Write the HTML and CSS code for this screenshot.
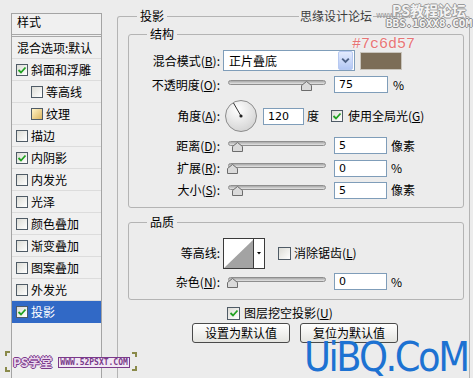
FILE: index.html
```html
<!DOCTYPE html>
<html lang="zh-CN">
<head>
  <meta charset="UTF-8">
  <title>图层样式 - 投影</title>
  <link rel="stylesheet" href="styles.css">
</head>
<body>
<div class="dialog">
  <div class="styles-list">
    <div class="list-head">样式</div>
    <div class="list-item plain">混合选项:默认</div>
    <div class="list-item"><span class="cb on"><svg viewBox="0 0 10 10"><path d="M1.5 5 L4 7.5 L8.5 2.5"/></svg></span>斜面和浮雕</div>
    <div class="list-item sub"><span class="cb"></span>等高线</div>
    <div class="list-item sub"><span class="cb texture"></span>纹理</div>
    <div class="list-item"><span class="cb"></span>描边</div>
    <div class="list-item"><span class="cb on"><svg viewBox="0 0 10 10"><path d="M1.5 5 L4 7.5 L8.5 2.5"/></svg></span>内阴影</div>
    <div class="list-item"><span class="cb"></span>内发光</div>
    <div class="list-item"><span class="cb"></span>光泽</div>
    <div class="list-item"><span class="cb"></span>颜色叠加</div>
    <div class="list-item"><span class="cb"></span>渐变叠加</div>
    <div class="list-item"><span class="cb"></span>图案叠加</div>
    <div class="list-item"><span class="cb"></span>外发光</div>
    <div class="list-item selected"><span class="cb on"><svg viewBox="0 0 10 10"><path d="M1.5 5 L4 7.5 L8.5 2.5"/></svg></span>投影</div>
  </div>

  <div class="main">
    <fieldset class="panel">
      <legend>投影</legend>
      <div class="panel-body">

        <fieldset class="group">
          <legend>结构</legend>
          <div class="rows">
            <div class="row h-blend">
              <span class="lbl">混合模式(<u>B</u>):</span>
              <div class="select">
                <span class="select-text">正片叠底</span>
                <span class="select-btn"><svg viewBox="0 0 13 18"><path d="M3 7 L6.5 10.5 L10 7"/></svg></span>
              </div>
              <div class="swatch"><span class="hex">#7c6d57</span></div>
            </div>

            <div class="row h-opacity">
              <span class="lbl">不透明度(<u>O</u>):</span>
              <div class="slider">
                <div class="track"></div>
                <div class="thumb" style="left: 75%"><svg viewBox="0 0 11 10"><path d="M5.5 0.5 L10.5 4.5 L10.5 9.5 L0.5 9.5 L0.5 4.5 Z"/></svg></div>
              </div>
              <input class="num" value="75">
              <span class="unit">%</span>
            </div>

            <div class="row h-angle">
              <span class="lbl">角度(<u>A</u>):</span>
              <svg class="dial" viewBox="0 0 32 32">
                <defs>
                  <radialGradient id="dialFill" cx="0.4" cy="0.3" r="0.8">
                    <stop offset="0" stop-color="#ffffff"/>
                    <stop offset="1" stop-color="#cfcfcf"/>
                  </radialGradient>
                </defs>
                <circle cx="16" cy="16" r="15.5" fill="url(#dialFill)" stroke="#8c8c8c"/>
                <line x1="16" y1="16" x2="8.5" y2="3" stroke="#333" stroke-width="1"/>
                <circle cx="16" cy="16" r="1.6" fill="#222"/>
              </svg>
              <input class="num angle" value="120">
              <span class="unit deg">度</span>
              <span class="cb on global"><svg viewBox="0 0 10 10"><path d="M1.5 5 L4 7.5 L8.5 2.5"/></svg></span>
              <span class="cb-text">使用全局光(<u>G</u>)</span>
            </div>

            <div class="row h-dist">
              <span class="lbl">距离(<u>D</u>):</span>
              <div class="slider">
                <div class="track"></div>
                <div class="thumb" style="left: 5%"><svg viewBox="0 0 11 10"><path d="M5.5 0.5 L10.5 4.5 L10.5 9.5 L0.5 9.5 L0.5 4.5 Z"/></svg></div>
              </div>
              <input class="num short" value="5">
              <span class="unit px">像素</span>
            </div>

            <div class="row h-spread">
              <span class="lbl">扩展(<u>R</u>):</span>
              <div class="slider">
                <div class="track"></div>
                <div class="thumb" style="left: 0%"><svg viewBox="0 0 11 10"><path d="M5.5 0.5 L10.5 4.5 L10.5 9.5 L0.5 9.5 L0.5 4.5 Z"/></svg></div>
              </div>
              <input class="num short" value="0">
              <span class="unit px">%</span>
            </div>

            <div class="row h-size">
              <span class="lbl">大小(<u>S</u>):</span>
              <div class="slider">
                <div class="track"></div>
                <div class="thumb" style="left: 5%"><svg viewBox="0 0 11 10"><path d="M5.5 0.5 L10.5 4.5 L10.5 9.5 L0.5 9.5 L0.5 4.5 Z"/></svg></div>
              </div>
              <input class="num short" value="5">
              <span class="unit px">像素</span>
            </div>
          </div>
        </fieldset>

        <fieldset class="group quality">
          <legend>品质</legend>
          <div class="rows q-rows">
            <div class="row h-contour">
              <span class="lbl">等高线:</span>
              <svg class="contour" viewBox="0 0 42 31">
                <rect x="0.5" y="0.5" width="41" height="30" fill="#fff" stroke="#3a3a3a"/>
                <polygon points="1,30 30,2 30,30" fill="#a3a3a3"/>
                <line x1="30.5" y1="1" x2="30.5" y2="30" stroke="#3a3a3a"/>
                <polygon points="34,14 38,14 36,16.5" fill="#000"/>
              </svg>
              <span class="cb aa"></span>
              <span class="cb-text">消除锯齿(<u>L</u>)</span>
            </div>

            <div class="row h-noise">
              <span class="lbl">杂色(<u>N</u>):</span>
              <div class="slider">
                <div class="track"></div>
                <div class="thumb" style="left: 0%"><svg viewBox="0 0 11 10"><path d="M5.5 0.5 L10.5 4.5 L10.5 9.5 L0.5 9.5 L0.5 4.5 Z"/></svg></div>
              </div>
              <input class="num short" value="0">
              <span class="unit px">%</span>
            </div>
          </div>
        </fieldset>

        <div class="knockout">
          <span class="cb on"><svg viewBox="0 0 10 10"><path d="M1.5 5 L4 7.5 L8.5 2.5"/></svg></span>
          <span class="cb-text">图层挖空投影(<u>U</u>)</span>
        </div>

        <div class="buttons">
          <button class="btn">设置为默认值</button>
          <button class="btn">复位为默认值</button>
        </div>
      </div>
    </fieldset>
  </div>
</div>

<!-- watermarks laid over the dialog -->
<div class="wm-missyuan"><span class="wm-cn">思缘设计论坛</span><span class="wm-url">www.missyuan.com</span></div>
<div class="wm-16xx8"><span class="wm-title">PS教程论坛</span><span class="wm-bbs">BBS.16XX8.COM</span></div>
<div class="wm-psxt">
  <span class="corner c-tl"></span><span class="corner c-bl"></span>
  <span class="psxt-name">PS学堂</span><span class="psxt-url">WWW.52PSXT.COM</span>
  <span class="corner c-tr"></span><span class="corner c-br"></span>
</div>
<div class="wm-uibq">UiBQ.CoM</div>
</body>
</html>
```

FILE: styles.css
```css
* {
  margin: 0;
  padding: 0;
  box-sizing: border-box;
}

body {
  font-family: "Noto Sans CJK SC", "Noto Sans", sans-serif;
  font-size: 12px;
  line-height: 14px;
  color: #000;
  background: #ececec;
  overflow: hidden;
  height: 378px;
}

u {
  text-decoration: underline;
}

.dialog {
  display: flex;
  height: 378px;
  overflow: hidden;
}

/* left list of layer styles */
.styles-list {
  width: 91px;
  margin-left: 11px;
  margin-top: 13px;
  height: 365px;
  border: 1px solid #a4a4a4;
  border-bottom: none;
  background: #f0f0f0;
}

.list-head {
  height: 23px;
  padding: 1px 0 0 5px;
  border-bottom: 3px double #a8a8a8;
}

.list-item {
  height: 22px;
  display: flex;
  align-items: center;
  padding-left: 4px;
  border-bottom: 1px solid #dcdcdc;
  white-space: nowrap;
  overflow: hidden;
}

.list-item.plain {
  padding-left: 5px;
}

.list-item.sub {
  padding-left: 19px;
}

.list-item.selected {
  background: #3169c6;
  color: #fff;
  border-bottom-color: #3169c6;
}

.list-item .cb {
  margin-right: 3px;
}

/* checkboxes */
.cb {
  display: inline-flex;
  align-items: center;
  justify-content: center;
  flex: none;
  width: 12px;
  height: 12px;
  border: 1px solid #4f5b66;
  background: linear-gradient(135deg, #dcdcd6, #ffffff);
}

.cb svg {
  width: 10px;
  height: 10px;
}

.cb svg path {
  fill: none;
  stroke: #21a121;
  stroke-width: 1.8;
}

.cb.texture {
  background: linear-gradient(135deg, #fff4c8, #dcb55e);
}

/* main area */
.main {
  margin-left: 15px;
  padding-top: 9px;
}

fieldset {
  border: 1px solid #b4b4b4;
  border-radius: 3px;
  padding: 0;
  margin: 0;
  min-width: 0;
}

legend {
  padding: 0 3px;
  line-height: 14px;
}

.panel {
  width: 353px;
  height: 369px;
  border-bottom: none;
  border-radius: 3px 3px 0 0;
}

.panel > legend {
  margin-left: 19px;
}

.panel-body {
  padding: 4px 5px 0 10px;
}

.group {
  width: 336px;
}

.group > legend {
  margin-left: 18px;
}

.rows {
  padding: 9px 0 6px 0;
}

.q-rows {
  padding: 8px 0 5px 0;
}

.quality {
  margin-top: 7px;
}

.row {
  display: flex;
  align-items: center;
}

.h-blend { height: 21px; }
.h-opacity { height: 27px; }
.h-angle { height: 36px; }
.h-dist { height: 23px; }
.h-spread { height: 22px; }
.h-size { height: 22px; }
.h-contour { height: 32px; }
.h-noise { height: 25px; }

.lbl {
  width: 91px;
  text-align: right;
  white-space: nowrap;
  margin-right: 3px;
}

/* blend mode select */
.select {
  width: 132px;
  height: 21px;
  border: 1px solid #7f9db9;
  background: #fff;
  display: flex;
  align-items: center;
  justify-content: space-between;
  padding: 1px;
}

.select-text {
  padding-left: 4px;
}

.select-btn {
  width: 15px;
  height: 19px;
  border: 1px solid #b7c9f1;
  border-radius: 2px;
  background: linear-gradient(180deg, #e3ebfe, #b3c7f4);
  display: flex;
}

.select-btn svg {
  width: 13px;
  height: 17px;
}

.select-btn path {
  fill: none;
  stroke: #4d6185;
  stroke-width: 2;
}

.swatch {
  position: relative;
  width: 42px;
  height: 18px;
  margin-left: 5px;
  background: #7c6d57;
  border: 1px solid #c8c4bc;
}

.hex {
  position: absolute;
  left: -9px;
  top: -16px;
  font-family: "Liberation Mono", monospace;
  font-size: 15px;
  line-height: 15px;
  color: #e87575;
  text-shadow: 0 0 2px #fff;
  white-space: nowrap;
}

/* sliders */
.slider {
  position: relative;
  width: 98px;
  height: 12px;
  margin-left: 5px;
}

.track {
  height: 5px;
  margin-top: 1px;
  border: 1px solid #8e8e8e;
  border-radius: 3px;
  background: linear-gradient(180deg, #a8a8a8, #e4e4e4);
}

.thumb {
  position: absolute;
  top: 2px;
  width: 11px;
  height: 10px;
  margin-left: -1px;
}

.thumb svg {
  display: block;
  width: 11px;
  height: 10px;
}

.thumb path {
  fill: #dadada;
  stroke: #6c6c6c;
  stroke-width: 1;
}

/* number inputs */
.num {
  width: 54px;
  height: 17px;
  margin-left: 8px;
  border: 1px solid #7f9db9;
  background: #fff;
  font-family: "DejaVu Sans", sans-serif;
  font-size: 11px;
  padding-left: 4px;
  outline: none;
}

.num.short {
  width: 53px;
}

.num.angle {
  width: 41px;
  margin-left: 6px;
}

.unit {
  margin-left: 5px;
}

.unit.px {
  margin-left: 4px;
}

.unit.deg {
  margin-left: 3px;
}

.dial {
  width: 32px;
  height: 32px;
  margin-left: 2px;
}

.cb.global {
  margin-left: 12px;
}

.cb-text {
  margin-left: 5px;
  white-space: nowrap;
}

.contour {
  width: 42px;
  height: 31px;
}

.cb.aa {
  margin-left: 13px;
  width: 13px;
  height: 13px;
}

.aa + .cb-text {
  margin-left: 3px;
}

.knockout {
  display: flex;
  align-items: center;
  height: 16px;
  margin-top: 5px;
  padding-left: 99px;
}

.knockout .cb {
  width: 13px;
  height: 13px;
}

.knockout .cb-text {
  margin-left: 4px;
}

.buttons {
  display: flex;
  gap: 10px;
  margin-top: 2px;
  padding-left: 64px;
}

.btn {
  width: 98px;
  height: 20px;
  font-family: "Noto Sans CJK SC", sans-serif;
  font-size: 12px;
  line-height: 14px;
  color: #000;
  border: 1px solid #4a4a4a;
  border-radius: 3px;
  background: linear-gradient(180deg, #ffffff, #e4e4e0);
}

/* watermarks */
.wm-missyuan {
  position: absolute;
  left: 299px;
  top: 9px;
  display: flex;
  align-items: center;
}

.wm-cn {
  padding: 0 1px;
  background: #ececec;
  color: #3c3c3c;
}

.wm-url {
  width: 34px;
  overflow: hidden;
  white-space: nowrap;
  margin-left: 3px;
  font-family: "DejaVu Sans", sans-serif;
  font-size: 8px;
  color: #9a9a9a;
  letter-spacing: -0.5px;
}

.wm-16xx8 {
  position: absolute;
  left: 386px;
  top: 3px;
  width: 86px;
  display: flex;
  flex-direction: column;
  align-items: center;
}

.wm-title {
  font-size: 14px;
  line-height: 14px;
  height: 15px;
  font-weight: bold;
  color: #f4f4f4;
  text-shadow: -1px 0 #9a9a9a, 1px 0 #9a9a9a, 0 -1px #9a9a9a, 0 1px #9a9a9a;
}

.wm-bbs {
  font-family: "DejaVu Sans Mono", monospace;
  font-size: 11px;
  line-height: 12px;
  font-weight: bold;
  color: #f4f4f4;
  text-shadow: -1px 0 #8a8a8a, 1px 0 #8a8a8a, 0 -1px #8a8a8a, 0 1px #8a8a8a;
}

.wm-psxt {
  position: absolute;
  left: 13px;
  top: 355px;
  display: flex;
  align-items: center;
  gap: 6px;
}

.psxt-name {
  font-size: 12px;
  font-weight: bold;
  color: #ead8ee;
  text-shadow: -1px 0 #7a3a8a, 1px 0 #7a3a8a, 0 -1px #7a3a8a, 0 1px #7a3a8a;
}

.psxt-url {
  font-family: "DejaVu Sans Mono", monospace;
  font-size: 8px;
  line-height: 9px;
  font-weight: bold;
  padding: 0 1px;
  border: 1px solid #7a3a8a;
  background: #f2e8f4;
  color: #7a3a8a;
}

.corner {
  position: absolute;
  width: 5px;
  height: 5px;
  border: 0 solid #8a8a4a;
}

.c-tl { left: -8px; top: -4px; border-width: 2px 0 0 2px; }
.c-bl { left: -8px; top: 12px; border-width: 0 0 2px 2px; }
.c-tr { right: -7px; top: -3px; border-width: 2px 2px 0 0; }
.c-br { right: -7px; top: 11px; border-width: 0 2px 2px 0; }

.wm-uibq {
  position: absolute;
  left: 304px;
  top: 343px;
  font-family: "DejaVu Sans Condensed", "DejaVu Sans", sans-serif;
  font-stretch: condensed;
  font-size: 41px;
  line-height: 28px;
  letter-spacing: -2.5px;
  color: #1d72d2;
  white-space: nowrap;
}
```
